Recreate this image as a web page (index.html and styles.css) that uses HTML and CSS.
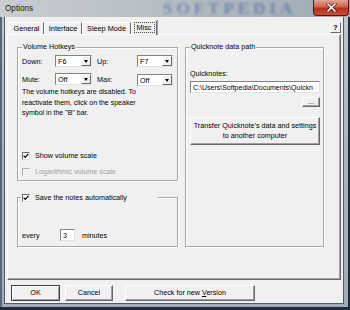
FILE: index.html
```html
<!DOCTYPE html>
<html lang="en">
<head>
    <meta charset="UTF-8">
    <title>Options</title>
    <link rel="stylesheet" href="styles.css">
</head>
<body>
    <div class="window">
        <div class="titlebar">
            <span class="title">Options</span>
            <span class="watermark">SOFTPEDIA</span>
            <button class="close" aria-label="Close">
                <svg width="11" height="9" viewBox="0 0 11 9">
                    <path d="M2 1 L9 8 M9 1 L2 8" stroke="#3a1410" stroke-width="3" stroke-linecap="square"/>
                    <path d="M2 1 L9 8 M9 1 L2 8" stroke="#fff" stroke-width="1.6" stroke-linecap="square"/>
                </svg>
            </button>
        </div>

        <div class="client">
            <div class="tabrow">
                <span class="tab tab--general">General</span>
                <span class="tab tab--interface">Interface</span>
                <span class="tab tab--sleep">Sleep Mode</span>
                <span class="tab tab--active"><span class="focus">Misc</span></span>
                <span class="help">?</span>
            </div>

            <div class="panel">
                <div class="column">
                    <div class="group group--hotkeys">
                        <div class="legend">Volume Hotkeys</div>
                        <div class="hotkeys">
                            <span>Down:</span>
                            <div class="combo">F6<span class="combo__arrow"></span></div>
                            <span class="hotkeys__label">Up:</span>
                            <div class="combo">F7<span class="combo__arrow"></span></div>

                            <span>Mute:</span>
                            <div class="combo">Off<span class="combo__arrow"></span></div>
                            <span class="hotkeys__label">Max:</span>
                            <div class="combo combo--low">Off<span class="combo__arrow"></span></div>
                        </div>
                        <p class="note">The volume hotkeys are disabled. To<br>reactivate them, click on the speaker<br>symbol in the "B" bar.</p>
                        <div class="checks">
                            <label class="check">
                                <span class="box"><svg width="6" height="6" viewBox="0 0 6 6"><path d="M0.6 2.6 L2.3 4.4 L5.4 0.9" fill="none" stroke="#000" stroke-width="1.3"/></svg></span>
                                Show volume scale
                            </label>
                            <label class="check check--disabled"><span class="box"></span>Logarithmic volume scale</label>
                        </div>
                    </div>

                    <div class="group group--save">
                        <label class="legend legend--check">
                            <span class="box"><svg width="6" height="6" viewBox="0 0 6 6"><path d="M0.6 2.6 L2.3 4.4 L5.4 0.9" fill="none" stroke="#000" stroke-width="1.3"/></svg></span>
                            Save the notes automatically
                        </label>
                        <div class="every">
                            <span class="every__label">every</span>
                            <span class="field field--small">3</span>
                            <span class="every__unit">minutes</span>
                        </div>
                    </div>
                </div>

                <div class="group group--path">
                    <div class="legend">Quicknote data path</div>
                    <span class="path-label">Quicknotes:</span>
                    <div class="field field--path">C:\Users\Softpedia\Documents\Quickn</div>
                    <button class="button button--browse">...</button>
                    <button class="button button--transfer">Transfer Quicknote's data and settings<br>to another computer</button>
                </div>
            </div>

            <div class="actions">
                <button class="button button--default button--ok">OK</button>
                <button class="button button--cancel">Cancel</button>
                <button class="button button--update">Check for new <u>V</u>ersion</button>
            </div>
        </div>
    </div>
</body>
</html>
```

FILE: styles.css
```css
/* Reset */
* {
    margin: 0;
    padding: 0;
    box-sizing: border-box;
}
body {
    font-family: "Liberation Sans", Arial, sans-serif;
    font-size: 7.2px;
    color: #000;
    background: #8a949e;
}
button {
    font: inherit;
    color: inherit;
}

/* Window frame */
.window {
    width: 350px;
    height: 310px;
    display: flex;
    flex-direction: column;
    background: linear-gradient(to bottom, #c4c9ce, #aeb6be 40%, #a3acb6);
    box-shadow: inset 0 -3px 0 #1f2c3f, inset -2px 0 0 #1f2c3f, inset 2px 0 0 #5a6677;
}
.titlebar {
    height: 17px;
    flex-shrink: 0;
    display: flex;
    align-items: center;
    padding-left: 5px;
    position: relative;
    overflow: hidden;
    background: linear-gradient(to right, #c9cdd1, #b4bcc4 50%, #9faab6);
}
.title {
    font-size: 8.2px;
    color: #151515;
}
.watermark {
    position: absolute;
    left: 163px;
    top: 0;
    font-family: "Liberation Serif", serif;
    font-weight: bold;
    font-size: 17px;
    line-height: 17px;
    letter-spacing: 4px;
    color: rgba(40, 80, 140, 0.45);
    filter: blur(1.4px);
}
.close {
    margin-left: auto;
    margin-right: 1px;
    align-self: flex-start;
    width: 36px;
    height: 16px;
    border: 1px solid #4a1b14;
    border-top: none;
    border-radius: 0 0 4px 4px;
    background: linear-gradient(to bottom, #e6a394, #d2604b 45%, #b6301d 55%, #c4503a);
    display: flex;
    align-items: center;
    justify-content: center;
    position: relative;
}

/* Client area */
.client {
    flex: 1;
    margin: 0 7px 7px 5px;
    background: #f0f0f0;
    box-shadow: 0 0 0 1px #4d5b6d;
    padding-top: 3px;
    display: flex;
    flex-direction: column;
}

/* Tabs */
.tabrow {
    height: 14px;
    margin: 0 2px;
    padding-left: 2px;
    display: flex;
    align-items: flex-end;
}
.tab {
    height: 12px;
    display: flex;
    align-items: center;
    justify-content: center;
    font-size: 7.3px;
    border-left: 1px solid #fff;
    border-top: 1px solid #fff;
    border-right: 1px solid #696969;
}
.tab--general { width: 35px; }
.tab--interface { width: 38px; }
.tab--sleep { width: 49px; }
.tab--active {
    width: 26px;
    height: 15px;
    margin-bottom: -1px;
    background: #f0f0f0;
    border-color: #fff;
    border-right: 1px solid #696969;
    box-shadow: 1px 0 0 #a0a0a0;
    position: relative;
    padding-bottom: 1px;
}
.focus {
    padding: 0 2px;
    outline: 1px dotted #444;
    line-height: 9px;
}
.help {
    margin-left: auto;
    align-self: center;
    width: 11px;
    height: 11px;
    font-weight: bold;
    font-size: 7px;
    display: flex;
    align-items: center;
    justify-content: center;
    border: 1px solid;
    border-color: #fff #696969 #696969 #fff;
    margin-top: 1px;
}

.panel {
    height: 246px;
    margin: 0 2px;
    border: 1px solid;
    border-color: #fff #696969 #696969 #fff;
    box-shadow: inset -1px -1px 0 #a0a0a0;
    padding: 12px 0 0 9px;
    display: grid;
    grid-template-columns: 161px 139px;
    column-gap: 7px;
    align-items: start;
}

/* Group boxes */
.group {
    border: 1px solid #a8a8a8;
    box-shadow: inset 1px 1px 0 #fff, 1px 1px 0 #fff;
    padding: 0 3px 0 4px;
    display: flex;
    flex-direction: column;
}
.legend {
    align-self: flex-start;
    margin-top: -6px;
    padding: 0 1px;
    line-height: 10px;
    background: #f0f0f0;
}
.group--hotkeys { height: 134px; }
.group--save {
    height: 50px;
    margin-top: 16px;
}
.group--path { height: 200px; }

.hotkeys {
    margin-top: 3px;
    display: grid;
    grid-template-columns: 33px 37px 45px 36px;
    row-gap: 6px;
    align-items: center;
}
.hotkeys__label { padding-left: 5px; }

.combo {
    height: 12px;
    display: flex;
    align-items: center;
    padding-left: 2px;
    background: #fff;
    border: 1px solid;
    border-color: #828282 #e3e3e3 #e3e3e3 #828282;
}
.combo--low { transform: translateY(1px); }
.combo__arrow {
    margin-left: auto;
    width: 10px;
    height: 10px;
    background: #f0f0f0;
    border: 1px solid;
    border-color: #fff #696969 #696969 #fff;
    display: flex;
    align-items: center;
    justify-content: center;
}
.combo__arrow::after {
    content: "";
    border-left: 2.5px solid transparent;
    border-right: 2.5px solid transparent;
    border-top: 3px solid #000;
}

.note {
    margin-top: 2px;
    line-height: 10.5px;
    font-size: 7px;
}

.checks {
    margin-top: auto;
    padding-bottom: 3px;
    display: flex;
    flex-direction: column;
    gap: 5px;
}
.check {
    height: 11px;
    display: flex;
    align-items: center;
    gap: 5px;
}
.check--disabled { color: #a0a0a0; }
.box {
    width: 8px;
    height: 8px;
    flex-shrink: 0;
    background: #fff;
    border: 1px solid;
    border-color: #6d6d6d #e3e3e3 #e3e3e3 #6d6d6d;
    display: flex;
    align-items: center;
    justify-content: center;
}
.check--disabled .box {
    background: #f0f0f0;
    border-color: #b0b0b0 #f4f4f4 #f4f4f4 #b0b0b0;
}

.legend--check {
    width: 137px;
    height: 11px;
    margin-left: -1px;
    display: flex;
    align-items: center;
    gap: 5px;
}

.every {
    margin-top: 26px;
    height: 12px;
    display: flex;
    align-items: center;
}
.every__label { width: 38px; }
.every__unit { margin-left: 7px; }

.field {
    height: 12px;
    display: flex;
    align-items: center;
    padding-left: 2px;
    background: #fff;
    border: 1px solid;
    border-color: #828282 #e3e3e3 #e3e3e3 #828282;
    white-space: nowrap;
    overflow: hidden;
}
.field--small { width: 15px; }

.path-label {
    margin-top: 16px;
    line-height: 11px;
}
.field--path {
    margin-top: 2px;
    width: 100%;
    font-size: 7px;
}

/* Buttons */
.button {
    background: #f0f0f0;
    border: 1px solid;
    border-color: #fff #696969 #696969 #fff;
    box-shadow: inset -1px -1px 0 #a0a0a0;
    text-align: center;
    line-height: 10px;
}
.button--browse {
    align-self: flex-end;
    margin-top: 4px;
    width: 18px;
    height: 10px;
    line-height: 6px;
}
.button--transfer {
    margin-top: 10px;
    height: 28px;
    width: 100%;
}

.actions {
    margin-top: 5px;
    padding-left: 6px;
    display: flex;
}
.actions .button { height: 16px; }
.button--ok { width: 49px; }
.button--default {
    border-color: #404040;
    box-shadow: inset 1px 1px 0 #fff, inset -1px -1px 0 #a0a0a0;
}
.button--cancel {
    width: 48px;
    margin-left: 5px;
}
.button--update {
    width: 130px;
    margin-left: 12px;
}
```
